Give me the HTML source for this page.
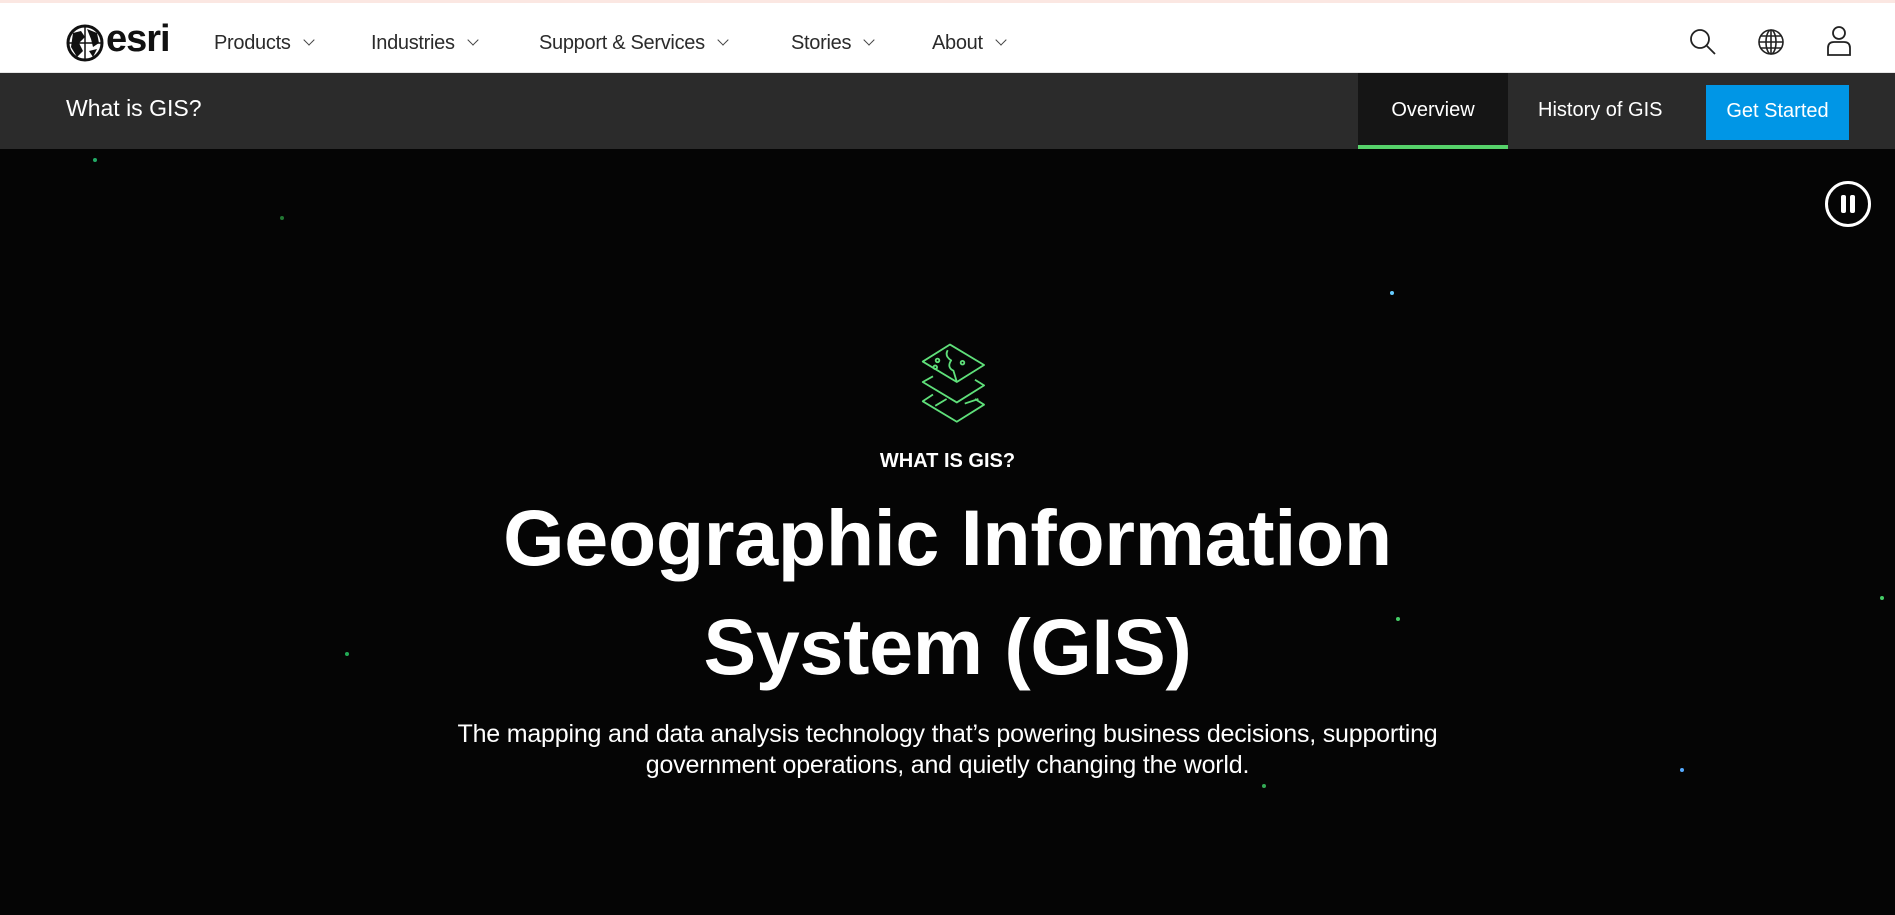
<!DOCTYPE html>
<html><head><meta charset="utf-8"><style>
*{margin:0;padding:0;box-sizing:border-box}
body{width:1895px;height:915px;overflow:hidden;background:#050505;font-family:"Liberation Sans",sans-serif;position:relative}
.top{position:absolute;left:0;top:0;width:1895px;height:73px;background:#fff;border-top:3px solid #fbe7e2;border-bottom:1px solid #e6e6e6}
.nav{position:absolute;top:29px;font-size:20px;color:#2b2b2b;letter-spacing:-0.3px}
.nav .c{display:inline-block;width:8px;height:8px;border-right:1.5px solid #444;border-bottom:1.5px solid #444;transform:rotate(45deg);margin-left:14px;position:relative;top:-5px}
.sub{position:absolute;left:0;top:73px;width:1895px;height:76px;background:#2b2b2b}
.star{position:absolute;width:4px;height:4px;border-radius:50%}
</style></head><body>
<div class="top">
<svg style="position:absolute;left:65px;top:20px" width="40" height="40" viewBox="0 0 40 40"><circle cx="20" cy="20" r="17" fill="#fff" stroke="#111" stroke-width="3"/><path d="M8 10 L16 8 L20 14 L14 20 L18 28 L12 34 L6 24 Z M22 6 L32 10 L34 20 L28 24 L26 16 Z M24 28 L32 26 L28 34 Z" fill="#111"/><path d="M4 20 H36 M20 3 V37" stroke="#111" stroke-width="1.5"/></svg>
<div style="position:absolute;left:106px;top:15px;font-size:38px;font-weight:bold;color:#111;letter-spacing:-1px">esri</div>
<div class="nav" style="left:214px">Products<span class="c"></span></div>
<div class="nav" style="left:371px">Industries<span class="c"></span></div>
<div class="nav" style="left:539px">Support &amp; Services<span class="c"></span></div>
<div class="nav" style="left:791px">Stories<span class="c"></span></div>
<div class="nav" style="left:932px">About<span class="c"></span></div>
<svg style="position:absolute;left:1688px;top:24px" width="30" height="30" viewBox="0 0 30 30" fill="none" stroke="#222" stroke-width="1.8"><circle cx="12" cy="12" r="9"/><path d="M18.5 18.5 L27 27"/></svg>
<svg style="position:absolute;left:1757px;top:25px" width="28" height="28" viewBox="0 0 28 28" fill="none" stroke="#222" stroke-width="1.6"><circle cx="14" cy="14" r="12"/><ellipse cx="14" cy="14" rx="5" ry="12"/><path d="M2 14H26M14 2V26M4 8H24M4 20H24"/></svg>
<svg style="position:absolute;left:1826px;top:22px" width="26" height="32" viewBox="0 0 26 32" fill="none" stroke="#222" stroke-width="1.8"><circle cx="13" cy="8" r="6"/><path d="M2 30 V23 Q2 17 8 17 H18 Q24 17 24 23 V30 Z"/></svg>
</div>
<div class="sub">
<div style="position:absolute;left:66px;top:22px;font-size:23px;color:#fff">What is GIS?</div>
<div style="position:absolute;left:1358px;top:0;width:150px;height:76px;background:#151515;border-bottom:4px solid #56d26a"></div>
<div style="position:absolute;left:1358px;width:150px;top:26px;text-align:center;font-size:20px;color:#fff">Overview</div>
<div style="position:absolute;left:1538px;top:26px;font-size:20px;color:#fff">History of GIS</div>
<div style="position:absolute;left:1706px;top:12px;width:143px;height:55px;background:#0096e6;color:#fff;font-size:20px;text-align:center;line-height:53px">Get Started</div>
</div>
<svg style="position:absolute;left:1824px;top:180px" width="48" height="48" viewBox="0 0 48 48"><circle cx="24" cy="24" r="21.5" fill="none" stroke="#fff" stroke-width="3"/><rect x="17" y="15" width="5" height="18" rx="2" fill="#fff"/><rect x="26" y="15" width="5" height="18" rx="2" fill="#fff"/></svg>
<svg style="position:absolute;left:910px;top:340px" width="80" height="84" viewBox="0 0 70 74" fill="none" stroke="#5fe07a" stroke-width="1.6" stroke-linejoin="round"><path d="M35 4 L65 22 L41 37 L11 19 Z"/><path d="M33 9 Q30 14 36 18 Q32 24 38 27 L41 37"/><circle cx="24" cy="18" r="1.6"/><circle cx="22" cy="24" r="1.6"/><circle cx="46" cy="20" r="1.6"/><path d="M20 32 L11 37 L41 55 L65 40 L57 35"/><path d="M20 48 L11 54 L41 72 L65 57 L57 52 M22 58 L32 52 M48 56 L60 52"/></svg>
<div style="position:absolute;left:0;width:1895px;top:450px;text-align:center;color:#fff;font-size:20px;font-weight:bold">WHAT IS GIS?</div>
<div style="position:absolute;left:0;width:1895px;top:483px;text-align:center;color:#fff;font-size:79px;font-weight:bold;line-height:109px;letter-spacing:-0.3px">Geographic Information<br>System (GIS)</div>
<div style="position:absolute;left:0;width:1895px;top:719px;text-align:center;color:#fff;font-size:25px;line-height:31px;letter-spacing:-0.2px">The mapping and data analysis technology that’s powering business decisions, supporting<br>government operations, and quietly changing the world.</div>
<div class="star" style="left:93px;top:158px;background:#2a6"></div>
<div class="star" style="left:1390px;top:291px;background:#6cf"></div>
<div class="star" style="left:1396px;top:617px;background:#4c6"></div>
<div class="star" style="left:1680px;top:768px;background:#5af"></div>
<div class="star" style="left:1880px;top:596px;background:#4c6"></div>
<div class="star" style="left:1262px;top:784px;background:#3a5"></div>
<div class="star" style="left:345px;top:652px;background:#2a5"></div>
<div class="star" style="left:280px;top:216px;background:#273"></div>
</body></html>
